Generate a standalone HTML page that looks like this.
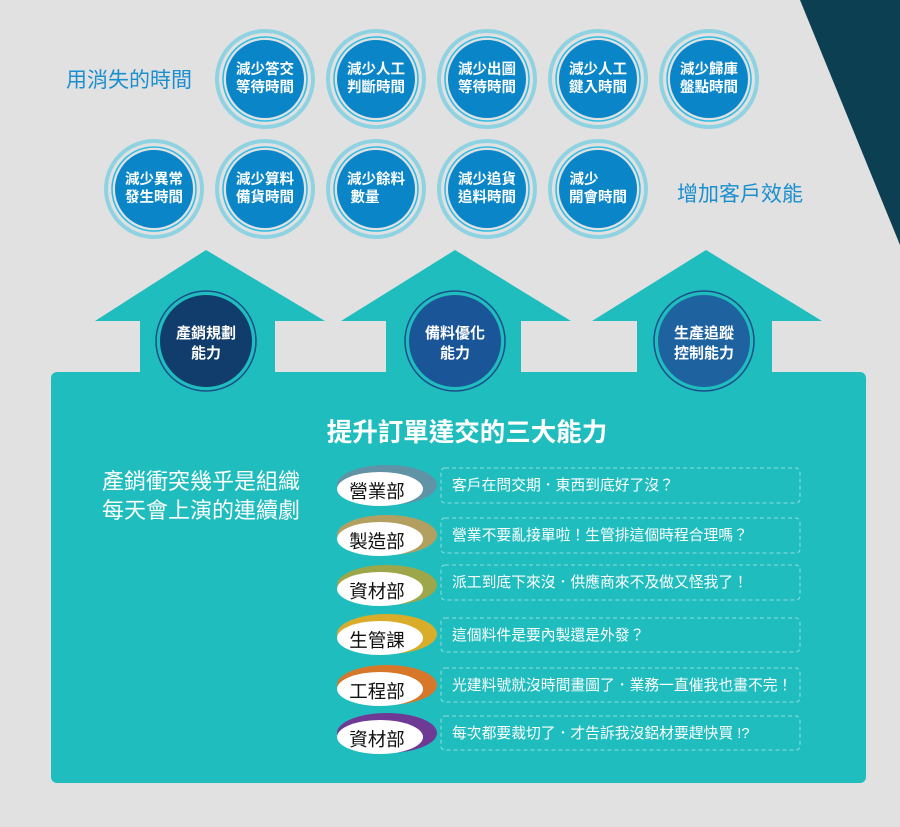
<!DOCTYPE html>
<html><head><meta charset="utf-8"><style>
body{margin:0;width:900px;height:827px;overflow:hidden;background:#e1e1e1}
svg{display:block}
text{font-family:"Liberation Sans","Noto Sans CJK TC",sans-serif}
</style></head><body>
<svg width="900" height="827" viewBox="0 0 900 827">
<polygon points="800,0 900,0 900,245" fill="#0d3f52"/>
<text x="66" y="87" font-size="21" fill="#1a8fd0">用消失的時間</text>
<text x="677" y="201" font-size="21" fill="#1a8fd0">增加客戶效能</text>
<g fill="none">
<g stroke="#8fd3e2" stroke-width="4">
<circle cx="265" cy="79" r="48"/><circle cx="376" cy="79" r="48"/><circle cx="487" cy="79" r="48"/><circle cx="598" cy="79" r="48"/><circle cx="709" cy="79" r="48"/>
<circle cx="154" cy="189" r="48"/><circle cx="265" cy="189" r="48"/><circle cx="376" cy="189" r="48"/><circle cx="487" cy="189" r="48"/><circle cx="598" cy="189" r="48"/>
</g>
<g stroke="#2cbbe3" stroke-width="1.5">
<circle cx="265" cy="79" r="42"/><circle cx="376" cy="79" r="42"/><circle cx="487" cy="79" r="42"/><circle cx="598" cy="79" r="42"/><circle cx="709" cy="79" r="42"/>
<circle cx="154" cy="189" r="42"/><circle cx="265" cy="189" r="42"/><circle cx="376" cy="189" r="42"/><circle cx="487" cy="189" r="42"/><circle cx="598" cy="189" r="42"/>
</g>
</g>
<g fill="#0a86c8">
<circle cx="265" cy="79" r="39"/><circle cx="376" cy="79" r="39"/><circle cx="487" cy="79" r="39"/><circle cx="598" cy="79" r="39"/><circle cx="709" cy="79" r="39"/>
<circle cx="154" cy="189" r="39"/><circle cx="265" cy="189" r="39"/><circle cx="376" cy="189" r="39"/><circle cx="487" cy="189" r="39"/><circle cx="598" cy="189" r="39"/>
</g>
<g font-size="14.5" fill="#fff" text-anchor="middle" font-weight="bold">
<text x="265" y="74">減少答交</text><text x="265" y="92">等待時間</text>
<text x="376" y="74">減少人工</text><text x="376" y="92">判斷時間</text>
<text x="487" y="74">減少出圖</text><text x="487" y="92">等待時間</text>
<text x="598" y="74">減少人工</text><text x="598" y="92">鍵入時間</text>
<text x="709" y="74">減少歸庫</text><text x="709" y="92">盤點時間</text>
<text x="154" y="184">減少異常</text><text x="154" y="202">發生時間</text>
<text x="265" y="184">減少算料</text><text x="265" y="202">備貨時間</text>
<text x="376" y="184">減少餘料</text><text x="365" y="202">數量</text>
<text x="487" y="184">減少追貨</text><text x="487" y="202">追料時間</text>
<text x="584" y="184">減少</text><text x="598" y="202">開會時間</text>
</g>
<g fill="#20bdbf">
<polygon points="206,250 325,321 275,321 275,380 140,380 140,321 95,321"/>
<polygon points="455,250 571,321 521,321 521,380 386,380 386,321 341,321"/>
<polygon points="706,250 822,321 772,321 772,380 637,380 637,321 592,321"/>
<rect x="51" y="372" width="815" height="411" rx="6"/>
</g>
<circle cx="206" cy="341" r="50" fill="none" stroke="#1a4f8a" stroke-width="1.5"/>
<circle cx="206" cy="341" r="46" fill="#103d6b"/>
<circle cx="455" cy="341" r="50" fill="none" stroke="#1a4f8a" stroke-width="1.5"/>
<circle cx="455" cy="341" r="46" fill="#1a5597"/>
<circle cx="704" cy="341" r="50" fill="none" stroke="#1a4f8a" stroke-width="1.5"/>
<circle cx="704" cy="341" r="46" fill="#1e62a0"/>
<g font-size="15" fill="#fff" text-anchor="middle" font-weight="bold">
<text x="206" y="338">產銷規劃</text><text x="206" y="358">能力</text>
<text x="455" y="338">備料優化</text><text x="455" y="358">能力</text>
<text x="704" y="338">生產追蹤</text><text x="704" y="358">控制能力</text>
</g>
<text x="467" y="441" font-size="25.5" font-weight="bold" fill="#fff" text-anchor="middle">提升訂單達交的三大能力</text>
<text x="201" y="489" font-size="22" fill="#fff" text-anchor="middle">產銷衝突幾乎是組織</text>
<text x="201" y="518" font-size="22" fill="#fff" text-anchor="middle">每天會上演的連續劇</text>
<g>
<ellipse cx="387" cy="485" rx="50" ry="20" fill="#5f93a5"/><ellipse cx="380" cy="489" rx="43" ry="17" fill="#fff"/>
<ellipse cx="387" cy="535" rx="50" ry="20" fill="#b3a060"/><ellipse cx="380" cy="539" rx="43" ry="17" fill="#fff"/>
<ellipse cx="387" cy="585" rx="50" ry="20" fill="#9ea64a"/><ellipse cx="380" cy="589" rx="43" ry="17" fill="#fff"/>
<ellipse cx="387" cy="634" rx="50" ry="20" fill="#d9ad2a"/><ellipse cx="380" cy="638" rx="43" ry="17" fill="#fff"/>
<ellipse cx="387" cy="685" rx="50" ry="20" fill="#d7772a"/><ellipse cx="380" cy="689" rx="43" ry="17" fill="#fff"/>
<ellipse cx="387" cy="733" rx="50" ry="20" fill="#6e3a96"/><ellipse cx="380" cy="737" rx="43" ry="17" fill="#fff"/>
</g>
<g font-size="18.5" fill="#111" text-anchor="middle">
<text x="377" y="498">營業部</text><text x="377" y="548">製造部</text><text x="377" y="598">資材部</text>
<text x="377" y="647">生管課</text><text x="377" y="698">工程部</text><text x="377" y="746">資材部</text>
</g>
<g fill="none" stroke="#8fdde0" stroke-width="1" stroke-dasharray="4,3">
<rect x="441" y="468" width="359" height="35" rx="4"/>
<rect x="441" y="518" width="359" height="35" rx="4"/>
<rect x="441" y="565" width="359" height="35" rx="4"/>
<rect x="441" y="618" width="359" height="34" rx="4"/>
<rect x="441" y="668" width="359" height="34" rx="4"/>
<rect x="441" y="716" width="359" height="34" rx="4"/>
</g>
<g font-size="14.8" fill="#fff">
<text x="452" y="490">客戶在問交期．東西到底好了沒？</text>
<text x="452" y="540">營業不要亂接單啦！生管排這個時程合理嗎？</text>
<text x="452" y="587">派工到底下來沒．供應商來不及做又怪我了！</text>
<text x="452" y="640">這個料件是要內製還是外發？</text>
<text x="452" y="690">光建料號就沒時間畫圖了．業務一直催我也畫不完！</text>
<text x="452" y="738">每次都要裁切了．才告訴我沒鋁材要趕快買 !?</text>
</g>
</svg>
</body></html>
